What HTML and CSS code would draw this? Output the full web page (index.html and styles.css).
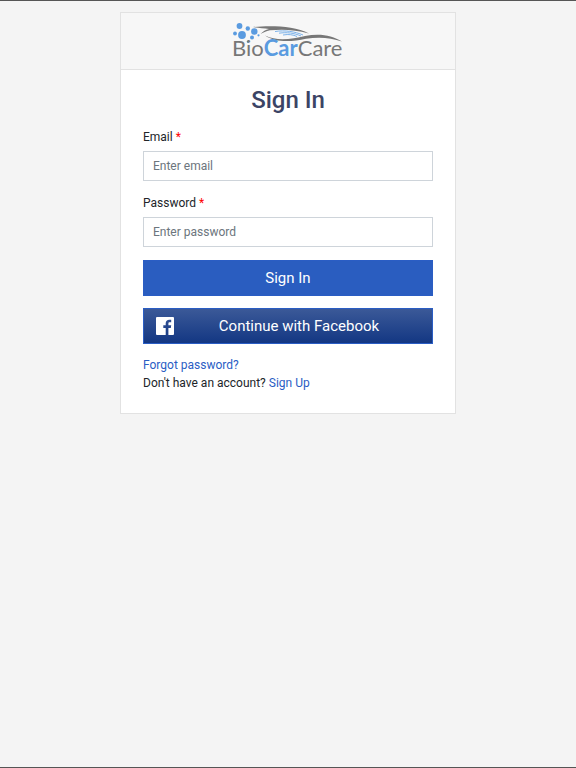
FILE: index.html
```html
<!DOCTYPE html>
<html lang="en">
<head>
    <meta charset="UTF-8">
    <meta name="viewport" content="width=device-width, initial-scale=1.0">
    <title>Sign In - BioCarCare</title>
    <link rel="stylesheet" href="styles.css">
</head>
<body>

<main class="card">
    <div class="card-header">
        <svg class="logo" viewBox="0 0 112 38" role="img" aria-label="BioCarCare">
            <!-- bubbles -->
            <g fill="#5a9be0">
                <circle cx="7.500" cy="4" r="2.900"/>
                <circle cx="3" cy="11.500" r="1.900"/>
                <circle cx="10" cy="13" r="3.900"/>
                <circle cx="15.800" cy="6.500" r="2.200"/>
                <circle cx="22.300" cy="9.500" r="3.200"/>
                <circle cx="20" cy="15.500" r="2"/>
                <circle cx="26.500" cy="13.300" r="1.100"/>
                <circle cx="16" cy="19.700" r="1.200"/>
            </g>
            <!-- car outline -->
            <path fill="#777" d="M21 5C38 3.500 62 3.500 77 11.500C63 7.500 51 7 38 8.200C34 9 31 10.500 28.500 12C31 9 33.500 7.600 37 6.900C32 6.300 27 6 21 5Z"/>
            <path fill="#777" d="M33 13.500C45 19.500 60 17 73 14C87 11 100 13 110 19.500C99 15.600 87 14.700 74 16.700C60 19.700 44 21 33 13.500Z"/>
            <g fill="none" stroke="#7db3ea" stroke-width="1">
                <path d="M43 9.500C53 8 63 9.500 71 13"/>
                <path d="M47 11.200C55 10 62 11 69 14"/>
                <path d="M51 13C57 12 61 12.700 65 14.500"/>
            </g>
            <text class="logo-text" x="0" y="34">Bio<tspan class="logo-accent">Car</tspan>Care</text>
        </svg>
    </div>
    <div class="card-body">
        <h1>Sign In</h1>
        <form>
            <div class="form-group">
                <label for="email">Email <span class="required">*</span></label>
                <input type="email" id="email" placeholder="Enter email">
            </div>
            <div class="form-group">
                <label for="password">Password <span class="required">*</span></label>
                <input type="password" id="password" placeholder="Enter password">
            </div>
            <button type="submit" class="btn">Sign In</button>
            <button type="button" class="btn btn-facebook">
                <svg class="fb-icon" viewBox="0 0 18 18" aria-hidden="true">
                    <path fill="#fff" d="M1 0H17A1 1 0 0 1 18 1V17A1 1 0 0 1 17 18H12.400V11H14.800L15.200 8.300H12.400V6.500C12.400 5.700 12.700 5.200 13.800 5.200H15.200V2.800C14.900 2.700 14.100 2.700 13.200 2.700C11.200 2.700 9.700 3.900 9.700 6.200V8.300H7.300V11H9.700V18H1A1 1 0 0 1 0 17V1A1 1 0 0 1 1 0Z"/>
                </svg>
                <span class="btn-label">Continue with Facebook</span>
            </button>
        </form>
        <div class="links">
            <a href="#">Forgot password?</a>
            <div>Don't have an account? <a href="#">Sign Up</a></div>
        </div>
    </div>
</main>

</body>
</html>
```

FILE: styles.css
```css
* {
    box-sizing: border-box;
}
body {
    margin: 0;
    min-height: 100vh;
    padding: 11px 0;
    border-top: 1px solid #555;
    border-bottom: 1px solid #555;
    background-color: #f4f4f4;
    color: #212529;
    font-family: Roboto, "Liberation Sans", sans-serif;
    font-size: 12px;
    line-height: 18px;
}
.card {
    width: 58.333%;
    margin: 0 auto;
    background-color: #fff;
    border: 1px solid #e2e2e2;
}
.card-header {
    display: flex;
    justify-content: center;
    padding: 9px 22px;
    background-color: #f7f7f7;
    border-bottom: 1px solid #e2e2e2;
}
.logo {
    width: 112px;
    height: 38px;
    overflow: visible;
}
.logo-text {
    font-family: Lato, sans-serif;
    font-size: 22px;
    fill: #777;
}
.logo-accent {
    font-weight: bold;
    fill: #5a9be0;
}
.card-body {
    padding: 16px 22px 21px;
}
h1 {
    margin: 0 0 14px;
    text-align: center;
    font-size: 24px;
    font-weight: 500;
    line-height: 28px;
    color: #3b4465;
}
.form-group {
    margin-bottom: 13px;
}
label {
    display: block;
    margin-bottom: 5px;
}
.required {
    color: #f00;
}
input {
    display: block;
    width: 100%;
    height: 30px;
    padding: 0 9px;
    border: 1px solid #ced4da;
    border-radius: 0;
    background-color: #fff;
    color: #495057;
    font: inherit;
}
input::placeholder {
    color: #6c757d;
}
.btn {
    display: flex;
    align-items: center;
    justify-content: center;
    width: 100%;
    height: 36px;
    margin-bottom: 12px;
    padding: 0 12px;
    border: 1px solid #2a5dc4;
    background-color: #2a5dc0;
    color: #fff;
    font-family: inherit;
    font-size: 15px;
    cursor: pointer;
}
.btn-facebook {
    background: linear-gradient(#3b5998, #133783);
}
.fb-icon {
    width: 18px;
    height: 18px;
}
.btn-label {
    flex: 1;
    padding-left: 4px;
}
a {
    color: #2a5dc4;
    text-decoration: none;
}
```
